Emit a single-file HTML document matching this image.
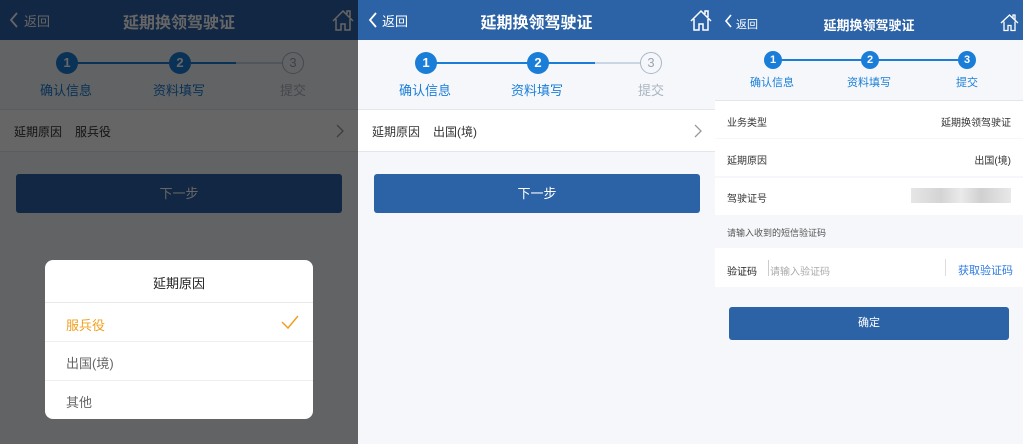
<!DOCTYPE html><html><head><meta charset="utf-8"><style>
*{margin:0;padding:0;box-sizing:border-box}
body{width:1023px;height:444px;overflow:hidden;background:#f5f7fa;font-family:"Liberation Sans","Noto Sans CJK SC",sans-serif;position:relative}
.p{position:absolute;top:0;height:444px;overflow:hidden;background:#f5f7fa}
.a{position:absolute}
.hd{position:absolute;left:0;right:0;top:0;height:40px;background:#2c63a7;color:#fff}
.t{position:absolute;white-space:nowrap}
.c{position:absolute;border-radius:50%;background:#1a7ed8;color:#fff;text-align:center;font-weight:bold}
.row{position:absolute;left:0;right:0;background:#fff}
.btn{position:absolute;background:#2c63a7;border-radius:3px;color:#fff;text-align:center}
</style></head><body>

<!-- panel 2 template used for panel1 and panel2 -->
<div class="p" style="left:0;width:358px">
 <div class="hd">
  <svg class="a" style="left:9px;top:12px" width="10" height="16"><path d="M8 1L2 8l6 7" stroke="#fff" stroke-width="1.8" fill="none"/></svg>
  <div class="t" style="left:24px;top:11px;font-size:13px">返回</div>
  <div class="t" style="left:0;right:0;top:9px;text-align:center;font-size:16px;font-weight:bold">延期换领驾驶证</div>
  <svg class="a" style="left:331px;top:8px" width="24" height="24"><path d="M2 13L12 3l10 10M5 11v11h5v-6h4v6h5V11M16 6V3h3v6" stroke="#fff" stroke-width="1.5" fill="none"/></svg>
 </div>
 <div class="a" style="left:67px;top:62px;width:113px;height:2px;background:#1a7ed8"></div>
 <div class="a" style="left:180px;top:62px;width:56px;height:2px;background:#1a7ed8"></div>
 <div class="a" style="left:236px;top:62px;width:57px;height:2px;background:#c9d6e4"></div>
 <div class="c" style="left:56px;top:52px;width:22px;height:22px;line-height:22px;font-size:13px">1</div>
 <div class="c" style="left:169px;top:52px;width:22px;height:22px;line-height:22px;font-size:13px">2</div>
 <div class="c" style="left:282px;top:52px;width:22px;height:22px;line-height:20px;font-size:13px;background:#f5f7fa;border:1.5px solid #a9b8c8;color:#9aa6b3;font-weight:normal">3</div>
 <div class="t" style="left:40px;top:80px;font-size:13px;color:#1a7ed8">确认信息</div>
 <div class="t" style="left:153px;top:80px;font-size:13px;color:#1a7ed8">资料填写</div>
 <div class="t" style="left:280px;top:80px;font-size:13px;color:#aab5c0">提交</div>
 <div class="row" style="top:109px;height:43px;border-top:1px solid #e3e6ea;border-bottom:1px solid #e3e6ea"></div>
 <div class="t" style="left:14px;top:123px;font-size:12px;color:#333">延期原因</div>
 <div class="t" style="left:75px;top:123px;font-size:12px;color:#333">服兵役</div>
 <svg class="a" style="left:336px;top:124px" width="8" height="14"><path d="M1 1l6 6-6 6" stroke="#999" stroke-width="1.3" fill="none"/></svg>
 <div class="btn" style="left:16px;top:174px;width:326px;height:39px;line-height:39px;font-size:13px">下一步</div>
 <div class="a" style="left:0;top:0;width:358px;height:444px;background:rgba(0,0,0,0.6)"></div>
 <div class="a" style="left:45px;top:260px;width:268px;height:159px;background:#fff;border-radius:8px;overflow:hidden">
  <div class="t" style="left:0;right:0;top:13px;text-align:center;font-size:13px;color:#222">延期原因</div>
  <div class="a" style="left:0;right:0;top:42px;height:1px;background:#e8e8e8"></div>
  <div class="t" style="left:21px;top:55px;font-size:13px;color:#f0a020">服兵役</div>
  <svg class="a" style="left:235px;top:54px" width="20" height="16"><path d="M2 8l6 6L18 2" stroke="#f0a020" stroke-width="1.5" fill="none"/></svg>
  <div class="a" style="left:0;right:0;top:81px;height:1px;background:#eee"></div>
  <div class="t" style="left:21px;top:93px;font-size:13px;color:#666">出国(境)</div>
  <div class="a" style="left:0;right:0;top:120px;height:1px;background:#eee"></div>
  <div class="t" style="left:21px;top:132px;font-size:13px;color:#666">其他</div>
 </div>
</div>

<div class="p" style="left:358px;width:357px">
 <div class="hd">
  <svg class="a" style="left:10px;top:12px" width="10" height="16"><path d="M8 1L2 8l6 7" stroke="#fff" stroke-width="1.8" fill="none"/></svg>
  <div class="t" style="left:24px;top:11px;font-size:13px">返回</div>
  <div class="t" style="left:0;right:0;top:9px;text-align:center;font-size:16px;font-weight:bold">延期换领驾驶证</div>
  <svg class="a" style="left:331px;top:8px" width="24" height="24"><path d="M2 13L12 3l10 10M5 11v11h5v-6h4v6h5V11M16 6V3h3v6" stroke="#fff" stroke-width="1.5" fill="none"/></svg>
 </div>
 <div class="a" style="left:68px;top:62px;width:113px;height:2px;background:#1a7ed8"></div>
 <div class="a" style="left:181px;top:62px;width:56px;height:2px;background:#1a7ed8"></div>
 <div class="a" style="left:237px;top:62px;width:57px;height:2px;background:#c9d6e4"></div>
 <div class="c" style="left:57px;top:52px;width:22px;height:22px;line-height:22px;font-size:13px">1</div>
 <div class="c" style="left:169px;top:52px;width:22px;height:22px;line-height:22px;font-size:13px">2</div>
 <div class="c" style="left:282px;top:52px;width:22px;height:22px;line-height:20px;font-size:13px;background:#f5f7fa;border:1.5px solid #a9b8c8;color:#9aa6b3;font-weight:normal">3</div>
 <div class="t" style="left:41px;top:80px;font-size:13px;color:#1a7ed8">确认信息</div>
 <div class="t" style="left:153px;top:80px;font-size:13px;color:#1a7ed8">资料填写</div>
 <div class="t" style="left:280px;top:80px;font-size:13px;color:#aab5c0">提交</div>
 <div class="row" style="top:109px;height:43px;border-top:1px solid #e3e6ea;border-bottom:1px solid #e3e6ea"></div>
 <div class="t" style="left:14px;top:123px;font-size:12px;color:#333">延期原因</div>
 <div class="t" style="left:75px;top:123px;font-size:12px;color:#333">出国(境)</div>
 <svg class="a" style="left:336px;top:124px" width="8" height="14"><path d="M1 1l6 6-6 6" stroke="#999" stroke-width="1.3" fill="none"/></svg>
 <div class="btn" style="left:16px;top:174px;width:326px;height:39px;line-height:39px;font-size:13px">下一步</div>
</div>

<div class="p" style="left:715px;width:308px">
 <div class="hd">
  <svg class="a" style="left:9px;top:14px" width="9" height="14"><path d="M7 1L2 7l5 6" stroke="#fff" stroke-width="1.6" fill="none"/></svg>
  <div class="t" style="left:21px;top:16px;font-size:11px">返回</div>
  <div class="t" style="left:0;right:0;top:15px;text-align:center;font-size:13px;font-weight:bold">延期换领驾驶证</div>
  <svg class="a" style="left:285px;top:13px" width="19" height="19"><path d="M1 10L9.5 2 18 10M4 8.5v9h4v-5h3v5h4v-9M13 5V2h2v5" stroke="#fff" stroke-width="1.3" fill="none"/></svg>
 </div>
 <div class="a" style="left:58px;top:59px;width:194px;height:2px;background:#1a7ed8"></div>
 <div class="c" style="left:49px;top:51px;width:18px;height:18px;line-height:18px;font-size:11px">1</div>
 <div class="c" style="left:146px;top:51px;width:18px;height:18px;line-height:18px;font-size:11px">2</div>
 <div class="c" style="left:243px;top:51px;width:18px;height:18px;line-height:18px;font-size:11px">3</div>
 <div class="t" style="left:35px;top:74px;font-size:11px;color:#1a7ed8">确认信息</div>
 <div class="t" style="left:132px;top:74px;font-size:11px;color:#1a7ed8">资料填写</div>
 <div class="t" style="left:241px;top:74px;font-size:11px;color:#1a7ed8">提交</div>
 <div class="row" style="top:100px;height:38px;border-top:1px solid #e3e6ea"></div>
 <div class="row" style="top:139px;height:37px"></div>
 <div class="row" style="top:178px;height:37px"></div>
 <div class="row" style="top:248px;height:39px"></div>
 <div class="t" style="left:12px;top:114px;font-size:10px;color:#333">业务类型</div>
 <div class="t" style="right:12px;top:114px;font-size:10px;color:#333">延期换领驾驶证</div>
 <div class="t" style="left:12px;top:152px;font-size:10px;color:#333">延期原因</div>
 <div class="t" style="right:12px;top:152px;font-size:10px;color:#333">出国(境)</div>
 <div class="t" style="left:12px;top:190px;font-size:10px;color:#333">驾驶证号</div>
 <div class="a" style="left:196px;top:188px;width:100px;height:15px;background:linear-gradient(90deg,#e6e6e6,#d4d4d4 30%,#eaeaea 50%,#d0d0d0 70%,#e8e8e8)"></div>
 <div class="t" style="left:12px;top:226px;font-size:9px;color:#555">请输入收到的短信验证码</div>
 <div class="t" style="left:12px;top:263px;font-size:10px;color:#222">验证码</div>
 <div class="a" style="left:53px;top:260px;width:1px;height:16px;background:#ccc"></div>
 <div class="t" style="left:55px;top:263px;font-size:10px;color:#aaa">请输入验证码</div>
 <div class="a" style="left:230px;top:259px;width:1px;height:17px;background:#ddd"></div>
 <div class="t" style="left:243px;top:262px;font-size:11px;color:#2c7be0">获取验证码</div>
 <div class="btn" style="left:14px;top:307px;width:280px;height:33px;line-height:33px;font-size:11px">确定</div>
</div>
</body></html>
